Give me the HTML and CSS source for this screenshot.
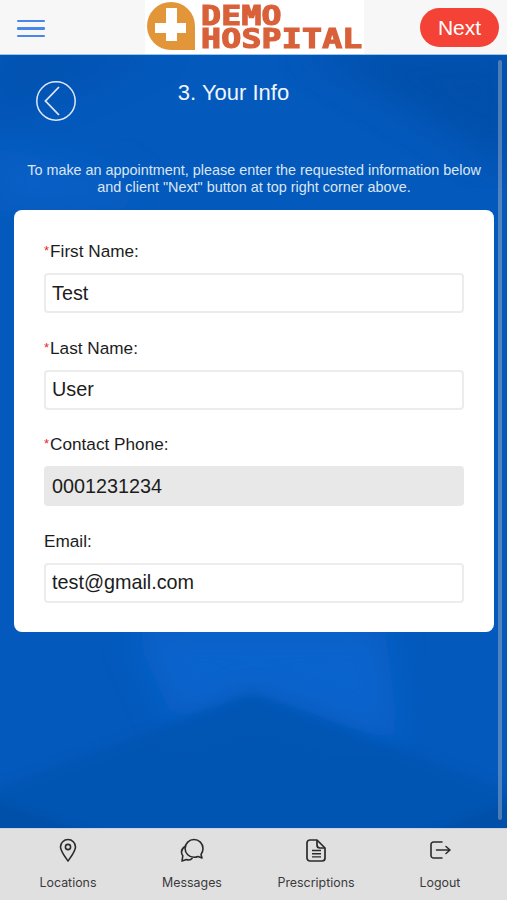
FILE: index.html
```html
<!DOCTYPE html>
<html lang="en">
  <head>
    <meta charset="UTF-8" />
    <meta name="viewport" content="width=device-width, initial-scale=1" />
    <title>Your Info</title>
    <link rel="stylesheet" href="styles.css">
  </head>
  <body>
    <div class="app">
      <header class="top-bar">
        <button class="menu-btn" aria-label="Menu">
          <span></span><span></span><span></span>
        </button>
        <div class="logo">
          <svg class="logo-mark" width="48" height="48" viewBox="0 0 48 48">
            <path d="M24 0a24 24 0 0 1 24 24v24H24A24 24 0 0 1 24 0z" fill="#e29639" />
            <path d="M19 6h11v15h9v10h-9v8H19v-8H8V21h11z" fill="#fff" />
          </svg>
          <div class="logo-text">DEMO
HOSPITAL</div>
        </div>
        <button class="next-btn">Next</button>
      </header>

      <main class="main">
        <!-- faint polygon pattern behind the page -->
        <svg class="bg-pattern" width="507" height="773" viewBox="0 0 507 773">
          <defs>
            <filter id="soft"><feGaussianBlur stdDeviation="5" /></filter>
            <filter id="softer"><feGaussianBlur stdDeviation="18" /></filter>
          </defs>
          <polygon points="300,-10 520,-10 520,120" fill="#024ca4" opacity="0.7" filter="url(#softer)" />
          <polygon points="-10,-10 170,-10 -10,70" fill="#024ca4" opacity="0.45" filter="url(#softer)" />
          <polygon points="-10,90 120,120 150,155 -10,155" fill="#0766cf" opacity="0.5" filter="url(#softer)" />
          <polygon points="130,570 385,570 400,690 252,638 175,668" fill="#0869d4" opacity="0.7" filter="url(#softer)" />
          <polygon points="-10,735 252,638 517,738 517,780 -10,780" fill="#0252ae" opacity="0.65" filter="url(#soft)" />
          <polygon points="-10,745 100,780 -10,780" fill="#01479a" opacity="0.4" filter="url(#soft)" />
          <polygon points="517,745 420,780 517,780" fill="#01479a" opacity="0.4" filter="url(#soft)" />
        </svg>
        <div class="scrollbar"></div>
        <div class="title-row">
          <button class="back-btn" aria-label="Back">
            <svg width="40" height="40" viewBox="0 0 40 40" fill="none" stroke="#dfe9f6">
              <circle cx="20" cy="20" r="19.200" stroke-width="1.500" />
              <path d="M23 6 L9.500 20 L23 34" stroke-width="1.800" />
            </svg>
          </button>
          <h1>3. Your Info</h1>
        </div>
        <p class="intro">
          To make an appointment, please enter the requested information below
          and client "Next" button at top right corner above.
        </p>

        <form class="card">
          <div class="form-group">
            <label for="firstName"><span class="req">*</span>First Name:</label>
            <input type="text" id="firstName" value="Test" />
          </div>
          <div class="form-group">
            <label for="lastName"><span class="req">*</span>Last Name:</label>
            <input type="text" id="lastName" value="User" />
          </div>
          <div class="form-group">
            <label for="phone"><span class="req">*</span>Contact Phone:</label>
            <input type="text" id="phone" value="0001231234" disabled />
          </div>
          <div class="form-group">
            <label for="email">Email:</label>
            <input type="text" id="email" value="test@gmail.com" />
          </div>
        </form>
      </main>

      <nav class="tabs">
        <a class="tab">
          <svg width="24" height="26" viewBox="0 0 24 26" fill="none" stroke="#2b2b2b" stroke-width="1.600">
            <path d="M12 24C8 18.500 4.500 14 4.500 10a7.500 7.500 0 0 1 15 0C19.500 14 16 18.500 12 24z" stroke-linejoin="round" />
            <circle cx="12" cy="10" r="2.600" />
          </svg>
          <span>Locations</span>
        </a>
        <a class="tab">
          <svg width="26" height="26" viewBox="0 0 26 26" fill="none" stroke="#2b2b2b" stroke-width="1.600" stroke-linejoin="round">
            <path d="M15 2.500a9 9 0 0 1 9 9c0 2.500-.8 4.500-2 6l1 3.500-4-1.500c-1.200.5-2.600.8-4 .8a8.900 8.900 0 0 1 0-17.800z" />
            <path d="M6 9.500C3.500 11 2.500 13 2.500 15c0 1.500.5 2.800 1.300 3.800L3 24l4.500-1.500c2 .8 4.500.3 6-1.500" />
          </svg>
          <span>Messages</span>
        </a>
        <a class="tab">
          <svg width="24" height="26" viewBox="0 0 24 26" fill="none" stroke="#2b2b2b" stroke-width="1.700" stroke-linejoin="round">
            <path d="M6 3h7l8 8v10a3 3 0 0 1-3 3H6a3 3 0 0 1-3-3V6a3 3 0 0 1 3-3z" />
            <path d="M13 3v5a3 3 0 0 0 3 3h5" />
            <path d="M8 13.500h9M8 16.700h9M8 19.900h9" stroke-width="1.400" />
          </svg>
          <span>Prescriptions</span>
        </a>
        <a class="tab">
          <svg width="26" height="26" viewBox="0 0 26 26" fill="none" stroke="#2b2b2b" stroke-width="1.600" stroke-linecap="round" stroke-linejoin="round">
            <path d="M15 5H6.500A2.500 2.500 0 0 0 4 7.500v11A2.500 2.500 0 0 0 6.500 21H15" />
            <path d="M9.500 13H23M19 9.500l4 3.500-4 3.500" />
          </svg>
          <span>Logout</span>
        </a>
      </nav>
    </div>
  </body>
</html>
```

FILE: styles.css
```css
* {
  box-sizing: border-box;
}
html,
body {
  height: 100%;
  margin: 0;
  padding: 0;
  font-family: 'Liberation Sans', Arial, sans-serif;
  color: #1c1c1c;
}
button {
  font: inherit;
  border: none;
  background: none;
  padding: 0;
}
.app {
  display: flex;
  flex-direction: column;
  height: 900px;
}

/* top bar */
.top-bar {
  height: 55px;
  flex: none;
  display: flex;
  align-items: flex-start;
  padding-left: 17px;
  background-color: #f7f7f7;
  border-bottom: 1px solid #9cc6ea;
}
.menu-btn {
  width: 28px;
  margin-top: 19.500px;
  display: flex;
  flex-direction: column;
  gap: 5.300px;
}
.menu-btn span {
  height: 2.400px;
  background-color: #4a86e8;
  border-radius: 1px;
}
.logo {
  width: 219px;
  height: 54px;
  margin-left: 100px;
  display: flex;
  padding: 2px 0 0 2px;
  background-color: #fff;
}
.logo-mark {
  flex: none;
}
.logo-text {
  margin: 2px 0 0 6px;
  font-family: 'DejaVu Sans Mono', monospace;
  font-weight: 700;
  font-size: 26.500px;
  line-height: 23px;
  letter-spacing: 0.2px;
  white-space: pre;
  color: #d9613a;
  -webkit-text-stroke: 1.200px #d9613a;
  transform: scaleX(1.25);
  transform-origin: left top;
}
.next-btn {
  width: 79px;
  height: 39px;
  margin: 8px 0 0 56px;
  border-radius: 20px;
  background-color: #f44336;
  color: #fff;
  font-size: 21px;
}

/* main */
.main {
  position: relative;
  flex: 1;
  padding: 26px 13px 0 14px;
  background-color: #0459bc;
  overflow: hidden;
}
.bg-pattern {
  position: absolute;
  left: 0;
  top: 0;
}
.scrollbar {
  position: absolute;
  top: 5px;
  right: 5px;
  width: 4px;
  height: 760px;
  border-radius: 2px;
  background-color: rgba(170, 180, 195, 0.45);
}
.title-row {
  position: relative;
  height: 52px;
  text-align: center;
}
.back-btn {
  position: absolute;
  left: 22px;
  top: 0;
  width: 40px;
  height: 40px;
}
.title-row h1 {
  margin: 0;
  padding-right: 41px;
  font-size: 22px;
  font-weight: 400;
  line-height: 24px;
  color: #f0f5fb;
}
.intro {
  position: relative;
  margin: 29px 0 0;
  padding: 0 5px;
  font-size: 14.400px;
  line-height: 17px;
  text-align: center;
  color: #dbe6f4;
}
.card {
  position: relative;
  margin-top: 14px;
  width: 480px;
  height: 422px;
  padding: 29px 30px 0;
  background-color: #fff;
  border-radius: 8px;
}
.form-group {
  height: 96.500px;
}
.form-group label {
  display: block;
  height: 34px;
  font-size: 17.200px;
  line-height: 24px;
}
.req {
  margin-right: 1px;
  color: #e8262a;
  font-size: 13px;
  vertical-align: 2px;
}
.form-group input {
  display: block;
  width: 420px;
  height: 40px;
  padding: 0 6px;
  font: inherit;
  font-size: 19.800px;
  color: #1c1c1c;
  background-color: #fff;
  border: 2px solid #ececec;
  border-radius: 4px;
  outline: none;
}
.form-group input:disabled {
  background-color: #e8e8e8;
  border-color: #e8e8e8;
  opacity: 1;
}

/* tab bar */
.tabs {
  height: 72px;
  flex: none;
  display: grid;
  grid-template-columns: repeat(4, 124px);
  padding: 8px 6px 0;
  background-color: #e0e0e0;
  border-top: 1px solid #c9d2dc;
}
.tab {
  display: flex;
  flex-direction: column;
  align-items: center;
  gap: 12px;
  font-family: 'Inter', sans-serif;
  font-size: 12.400px;
  line-height: 16px;
  color: #3a3a3a;
}
.tab svg {
  flex: none;
}
```
